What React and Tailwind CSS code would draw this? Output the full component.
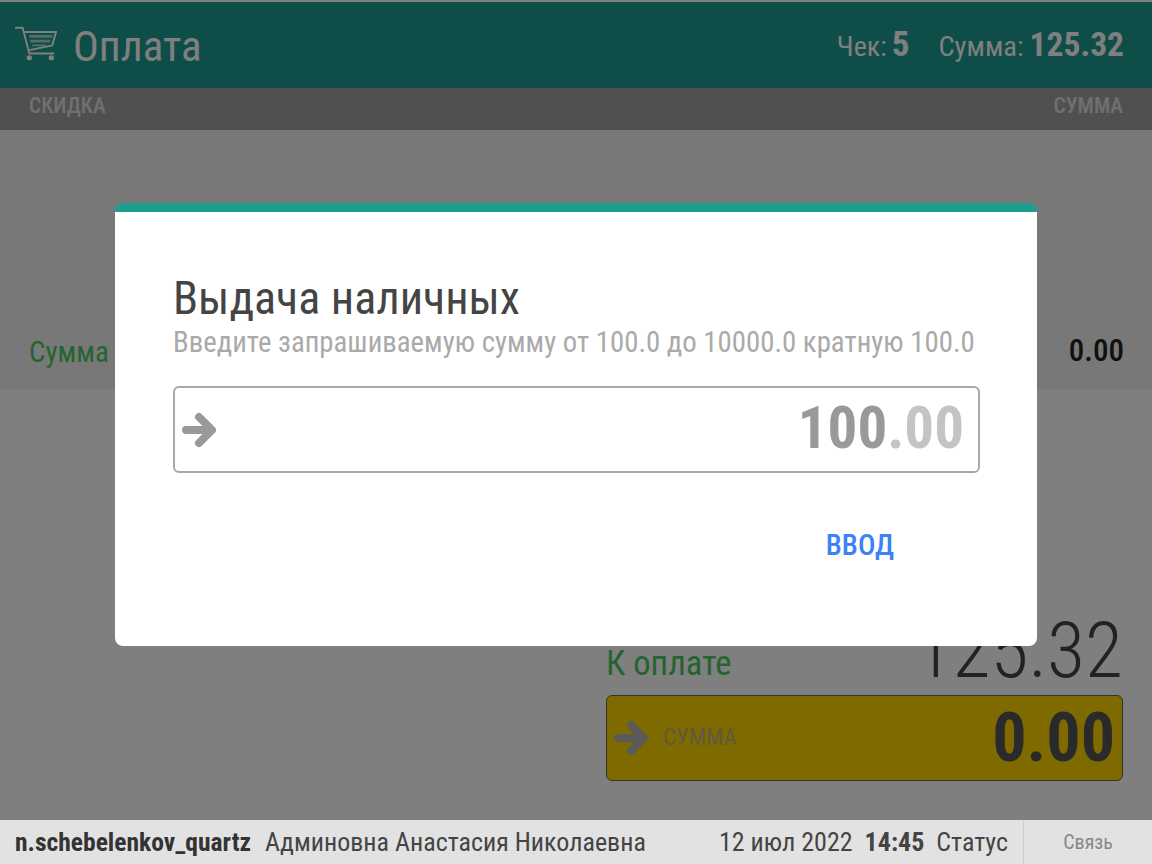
import React from "react";

const Cart = ({ className }) => (
  <svg viewBox="0 0 44 38" className={className} fill="none">
    <path d="M0 2.5h8l7 27h26" stroke="currentColor" strokeWidth="2" />
    <path d="M10 7h33l-4 14-24 5" stroke="currentColor" strokeWidth="2" />
    <path d="M15 10h24v3H15zM16 15h21v3H16zM18 20h14v2H18z" fill="currentColor" opacity="0.65" />
    <circle cx="15" cy="34" r="2.8" fill="currentColor" />
    <circle cx="38" cy="34" r="2.8" fill="currentColor" />
  </svg>
);

const Arrow = ({ className }) => (
  <svg viewBox="0 0 34 36" className={className} fill="none">
    <path d="M4 18h24M17 5l13 13-13 13" stroke="currentColor" strokeWidth="8" strokeLinecap="round" strokeLinejoin="round" />
  </svg>
);

export default function App() {
  return (
    <div className="relative w-[1152px] h-[864px] overflow-hidden flex flex-col bg-white font-['Roboto',sans-serif] font-stretch-condensed">
      {/* Main */}
      <div className="relative h-[820px] flex flex-col shrink-0">
        <div className="h-[86px] mt-[2px] bg-[#1c9a90] text-white flex items-center justify-between pl-[15px] pr-[28px] shrink-0">
          <div className="flex items-center gap-[16px]">
            <Cart className="w-[42px] h-[37px] mb-[3px]" />
            <span className="text-[43px] leading-none mt-[2px]">Оплата</span>
          </div>
          <div className="flex items-baseline">
            <span className="text-[28px]">Чек:</span>
            <span className="text-[35px] font-bold ml-[5px]">5</span>
            <span className="text-[28.5px] ml-[29px]">Сумма:</span>
            <span className="text-[33.5px] font-bold ml-[6px]">125.32</span>
          </div>
        </div>
        <div className="h-[42px] pb-[5px] bg-[#a0a0a0] text-[#e0e0e0] font-medium text-[21.5px] flex items-center justify-between px-[29px] shrink-0">
          <span>СКИДКА</span>
          <span>СУММА</span>
        </div>
        <div className="h-[260px] bg-[#f0f0f0] flex items-end justify-between pl-[29px] pr-[28px] pb-[16px] shrink-0">
          <span className="text-[29px] text-[#4cc85e]">Сумма</span>
          <span className="text-[31px] font-medium text-[#222]">0.00</span>
        </div>
        <div className="flex-1 flex flex-col items-end pr-[29px] pt-[222px]">
          <div className="w-[517px] flex items-end justify-between">
            <span className="text-[34.5px] text-[#4cc85e]">К оплате</span>
            <span className="text-[78px] leading-[78px] font-light text-[#444]">125.32</span>
          </div>
          <div className="w-[517px] h-[86px] mt-[5px] bg-[#ffd500] border border-[#666] rounded-[6px] flex items-center pl-[7px] pr-[7px]">
            <Arrow className="w-[34px] h-[36px] text-[#b4b4b4]" />
            <span className="ml-[15px] text-[23px] text-[#bcb478]">СУММА</span>
            <span className="ml-auto text-[68px] font-bold text-[#555]">0.00</span>
          </div>
        </div>
        {/* Dim */}
        <div className="absolute inset-0 bg-black/50" />
      </div>

      {/* Status bar */}
      <div className="h-[44px] bg-[#e2e2e2] flex items-center pl-[15px] text-[26px] text-[#444] shrink-0">
        <span className="font-bold text-[#333] text-[25.5px]">n.schebelenkov_quartz</span>
        <span className="ml-[14px]">Админовна Анастасия Николаевна</span>
        <span className="ml-auto">12 июл 2022</span>
        <span className="ml-[12px] font-bold">14:45</span>
        <span className="ml-[12px]">Статус</span>
        <div className="w-[129px] h-full ml-[15px] border-l border-[#ccc] flex items-center justify-center text-[20px] text-[#888]">
          Связь
        </div>
      </div>

      {/* Dialog */}
      <div className="absolute left-[115px] top-[203px] w-[922px] h-[443px] bg-white rounded-[8px] border-t-[9px] border-[#1b9e8f] pl-[58px] pr-[57px] pt-[60px] flex flex-col">
        <div className="text-[46px] leading-[52px] text-[#444]">Выдача наличных</div>
        <div className="text-[28.8px] leading-[32px] text-[#aaa] mt-[2px]">
          Введите запрашиваемую сумму от 100.0 до 10000.0 кратную 100.0
        </div>
        <div className="mt-[28px] h-[87px] border-2 border-[#a8a8a8] rounded-[6px] flex items-center pl-[7px] pr-[14px]">
          <Arrow className="w-[34px] h-[36px] text-[#999]" />
          <span className="ml-auto text-[59px] font-bold text-[#999] mb-[2px]">
            100<span className="text-[#c4c4c4]">.00</span>
          </span>
        </div>
        <div className="mt-[51px] flex justify-end pr-[86px]">
          <span className="text-[29px] font-medium text-[#3b82f6]">ВВОД</span>
        </div>
      </div>
    </div>
  );
}
